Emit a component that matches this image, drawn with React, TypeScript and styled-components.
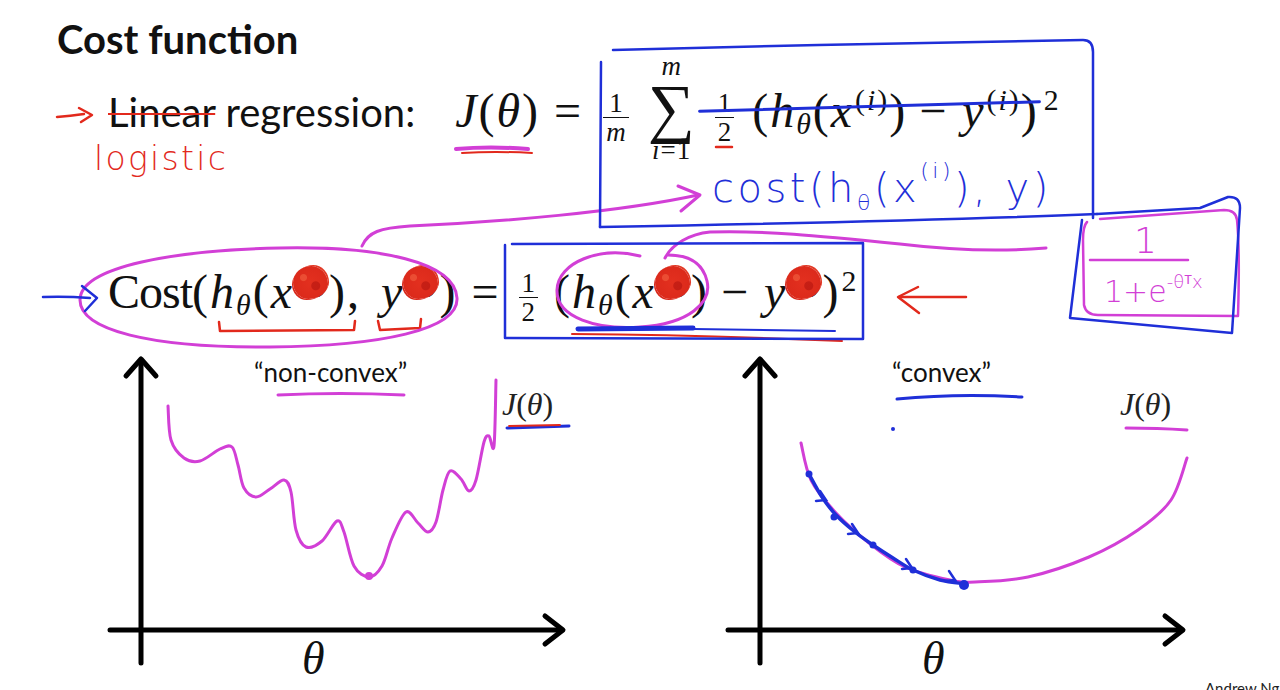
import React from 'react';
import styled, { createGlobalStyle } from 'styled-components';

const INK_BLUE = '#1f2fd8';
const INK_PINK = '#d23fd6';
const INK_RED = '#e2291c';

const GlobalStyle = createGlobalStyle`
  html, body { margin: 0; padding: 0; background: #fff; }
  body { font-family: Lato, 'Liberation Sans', sans-serif; }
`;

const Slide = styled.div`
  position: relative;
  width: 1280px;
  height: 690px;
  overflow: hidden;
  background: #fff;
  color: #111;
  display: flex;
  flex-direction: column;
`;

const Title = styled.h1`
  margin: 20px 0 0 57px;
  height: 33px;
  font: 700 40px/39px Lato, 'Liberation Sans', sans-serif;
`;

const FormulaRow = styled.div<{ $height: number }>`
  height: ${(p) => p.$height}px;
  padding-left: 108px;
  white-space: nowrap;
  line-height: 1;
`;

const Words = styled.span`
  font: 400 40px Lato, 'Liberation Sans', sans-serif;
`;

const Struck = styled.span`
  text-decoration: line-through;
  text-decoration-color: ${INK_RED};
  text-decoration-thickness: 2px;
`;

const Math = styled.span<{ $gap?: number }>`
  font-family: 'Liberation Serif', 'Times New Roman', serif;
  font-size: 48px;
  letter-spacing: 2px;
  margin-left: ${(p) => p.$gap ?? 0}px;
`;

const Roman = styled.span`
  letter-spacing: -1px;
`;

const I = styled.i`
  font-style: italic;
`;

const Op = styled.span<{ $l: number; $r: number }>`
  margin: 0 ${(p) => p.$r}px 0 ${(p) => p.$l}px;
`;

const Frac = styled.span<{ $drop: number; $l?: number; $r?: number }>`
  display: inline-block;
  vertical-align: -${(p) => p.$drop}px;
  font-size: 27px;
  letter-spacing: 0;
  line-height: 1;
  text-align: center;
  margin: 0 ${(p) => p.$r ?? 3}px 0 ${(p) => p.$l ?? 3}px;
`;

const Num = styled.span`
  display: block;
  padding: 0 3px;
`;

const Den = styled.span`
  display: block;
  border-top: 1.5px solid #111;
  padding: 1px 3px 0;
`;

const BigOp = styled.span`
  display: inline-block;
  vertical-align: -32px;
  text-align: center;
  line-height: 1;
  letter-spacing: 1px;
  margin: 0 16px 0 16px;
`;

const Limit = styled.span`
  display: block;
  font-size: 27px;
`;

const Sigma = styled.span`
  display: block;
  font-size: 66px;
  line-height: 0.86;
`;

const Sup = styled.sup<{ $l?: number }>`
  position: relative;
  font-size: 0.62em;
  line-height: 0;
  vertical-align: 0.58em;
  margin-left: ${(p) => p.$l ?? 1}px;
`;

const Sub = styled.sub`
  font-size: 0.62em;
  line-height: 0;
  vertical-align: -0.22em;
`;

const Blot = styled.span`
  position: absolute;
  left: -2px;
  top: 2px;
  width: 35px;
  height: 33px;
  border-radius: 52% 48% 55% 45% / 50% 55% 45% 50%;
  background:
    radial-gradient(circle at 30% 35%, rgba(240, 90, 60, 0.7) 0 3px, transparent 4px),
    radial-gradient(circle at 65% 60%, rgba(180, 20, 15, 0.6) 0 4px, transparent 5px),
    radial-gradient(circle at 50% 50%, #e3301f 0%, #dc2a1b 70%, #c9231a 100%);
  box-shadow: 2px -2px 0 -1px #e23a26, -2px 2px 0 -1px #d8271a;
`;

const Cancelled = styled.span`
  position: relative;
  &::after {
    content: '';
    position: absolute;
    left: -14px;
    right: -2px;
    top: 21px;
    height: 3px;
    background: ${INK_BLUE};
    transform: rotate(-1.6deg);
    border-radius: 2px;
  }
`;

const PlotRow = styled.div`
  display: grid;
  grid-template-columns: 500px 500px;
  column-gap: 120px;
  padding-left: 100px;
  height: 340px;
`;

const Plot = styled.div`
  position: relative;
  width: 500px;
  height: 340px;
`;

const PlotCanvas = styled.svg`
  display: block;
`;

const Caption = styled.span<{ $x: number }>`
  position: absolute;
  top: 6px;
  left: ${(p) => p.$x}px;
  font: 400 26px Lato, 'Liberation Sans', sans-serif;
  color: #111;
`;

const CurveLabel = styled.span<{ $x: number }>`
  position: absolute;
  top: 36px;
  left: ${(p) => p.$x}px;
  font: 32px 'Liberation Serif', 'Times New Roman', serif;
  color: #222;
`;

const AxisLabel = styled.span<{ $x: number }>`
  position: absolute;
  top: 282px;
  left: ${(p) => p.$x}px;
  font: italic 46px 'Liberation Serif', 'Times New Roman', serif;
`;

const Ink = styled.svg`
  position: absolute;
  left: 0;
  top: 0;
  pointer-events: none;
  fill: none;
  stroke-linecap: round;
  stroke-linejoin: round;
`;

const Credit = styled.span`
  position: absolute;
  left: 1205px;
  top: 679px;
  font: 400 15px Lato, 'Liberation Sans', sans-serif;
  color: #222;
`;

type Pt = [number, number];

const smooth = (pts: Pt[]) => {
  let d = `M${pts[0][0]} ${pts[0][1]}`;
  for (let i = 0; i < pts.length - 1; i++) {
    const p0 = pts[i - 1] || pts[i];
    const p1 = pts[i];
    const p2 = pts[i + 1];
    const p3 = pts[i + 2] || p2;
    const c1 = [p1[0] + (p2[0] - p0[0]) / 6, p1[1] + (p2[1] - p0[1]) / 6];
    const c2 = [p2[0] - (p3[0] - p1[0]) / 6, p2[1] - (p3[1] - p1[1]) / 6];
    d += ` C${c1[0]} ${c1[1]} ${c2[0]} ${c2[1]} ${p2[0]} ${p2[1]}`;
  }
  return d;
};

const wavy: Pt[] = [
  [168, 406], [171, 440], [184, 458], [200, 461], [220, 449], [232, 447],
  [238, 465], [244, 488], [256, 497], [270, 489], [284, 480], [291, 492],
  [296, 530], [306, 547], [322, 541], [337, 521], [344, 532], [354, 566],
  [369, 577], [382, 566], [392, 538], [406, 512], [418, 523], [428, 532],
  [436, 522], [443, 490], [450, 471], [461, 479], [469, 491], [476, 480],
  [484, 442], [489, 436], [494, 446], [496, 380],
];

const bowl: Pt[] = [
  [801, 443], [811, 480], [836, 513], [869, 543], [905, 567], [950, 580],
  [975, 582], [1028, 577], [1089, 557], [1138, 530], [1171, 500], [1187, 458],
];

const descent: Pt[] = [
  [809, 474], [822, 497], [836, 515], [855, 532], [873, 545], [893, 558],
  [913, 570], [940, 580], [966, 584],
];

const steps: Pt[] = [[809, 474], [834, 517], [873, 545], [913, 570], [964, 585]];
const heads: Pt[] = [[826, 500], [858, 533], [912, 568], [955, 580]];

const AxisPair = ({ x0, yAxis, xEnd }: { x0: number; yAxis: number; xEnd: number }) => (
  <g stroke="#000" strokeWidth={5} fill="none" strokeLinecap="round" strokeLinejoin="round">
    <path d={`M${yAxis} 362 L${yAxis} 663`} />
    <path d={`M${yAxis - 15} 376 L${yAxis} 359 L${yAxis + 15} 376`} />
    <path d={`M${x0} 630 L${xEnd} 630`} />
    <path d={`M${xEnd - 17} 616 L${xEnd + 1} 630 L${xEnd - 17} 644`} />
  </g>
);

const hand = "'DejaVu Sans', sans-serif";

export default function App() {
  return (
    <>
      <GlobalStyle />
      <Slide>
        <Title>Cost function</Title>

        <FormulaRow $height={215}>
          <Words>
            <Struck>Linear</Struck> regression:
          </Words>
          <Math $gap={40}>
            <I>J</I>(<I>θ</I>)
            <Op $l={14} $r={16}>=</Op>
            <Frac $drop={14} $l={4}>
              <Num>1</Num>
              <Den>
                <I>m</I>
              </Den>
            </Frac>
            <BigOp>
              <Limit>
                <I>m</I>
              </Limit>
              <Sigma>∑</Sigma>
              <Limit>
                <I>i</I>=1
              </Limit>
            </BigOp>
            <Cancelled>
              <Frac $drop={14} $r={18}>
                <Num>1</Num>
                <Den>2</Den>
              </Frac>
              (<I>h</I>
              <Sub>
                <I>θ</I>
              </Sub>
              (<I>x</I>
              <Sup>
                (<I>i</I>)
              </Sup>
              )<Op $l={12} $r={14}>−</Op>
              <I>y</I>
              <Sup>
                (<I>i</I>)
              </Sup>
              )
            </Cancelled>
            <Sup $l={5}>2</Sup>
          </Math>
        </FormulaRow>

        <FormulaRow $height={82}>
          <Math>
            <Roman>Cost</Roman>(<I>h</I>
            <Sub>
              <I>θ</I>
            </Sub>
            (<I>x</I>
            <Sup>
              (<I>i</I>)<Blot />
            </Sup>
            ),<Op $l={6} $r={0}> </Op>
            <I>y</I>
            <Sup>
              (<I>i</I>)<Blot />
            </Sup>
            )<Op $l={14} $r={15}>=</Op>
            <Frac $drop={13} $r={16}>
              <Num>1</Num>
              <Den>2</Den>
            </Frac>
            (<I>h</I>
            <Sub>
              <I>θ</I>
            </Sub>
            (<I>x</I>
            <Sup>
              (<I>i</I>)<Blot />
            </Sup>
            )<Op $l={12} $r={14}>−</Op>
            <I>y</I>
            <Sup>
              (<I>i</I>)<Blot />
            </Sup>
            )<Sup>2</Sup>
          </Math>
        </FormulaRow>

        <PlotRow>
          <Plot>
            <PlotCanvas width={500} height={340} viewBox="100 350 500 340">
              <AxisPair x0={110} yAxis={141} xEnd={562} />
              <path d={smooth(wavy)} stroke={INK_PINK} strokeWidth={3} fill="none" strokeLinecap="round" />
              <circle cx={369} cy={576} r={4} fill={INK_PINK} />
              <path d="M278 395 Q340 392 404 395" stroke={INK_PINK} strokeWidth={3} fill="none" strokeLinecap="round" />
              <path d="M507 428 L569 426" stroke={INK_BLUE} strokeWidth={3} fill="none" strokeLinecap="round" />
              <path d="M509 426 L560 425" stroke={INK_RED} strokeWidth={1.8} fill="none" strokeLinecap="round" />
            </PlotCanvas>
            <Caption $x={154}>“non-convex”</Caption>
            <CurveLabel $x={402}>
              <I>J</I>(<I>θ</I>)
            </CurveLabel>
            <AxisLabel $x={202}>θ</AxisLabel>
          </Plot>
          <Plot>
            <PlotCanvas width={500} height={340} viewBox="720 350 500 340">
              <AxisPair x0={728} yAxis={760} xEnd={1182} />
              <path d={smooth(bowl)} stroke={INK_PINK} strokeWidth={3} fill="none" strokeLinecap="round" />
              <path d={smooth(descent)} stroke={INK_BLUE} strokeWidth={3.5} fill="none" strokeLinecap="round" />
              {steps.map(([x, y], i) => (
                <circle key={i} cx={x} cy={y} r={i === steps.length - 1 ? 5 : 3.5} fill={INK_BLUE} />
              ))}
              {heads.map(([x, y], i) => (
                <path
                  key={i}
                  d={`M${x - 6} ${y - 9} L${x} ${y} L${x - 10} ${y + 1}`}
                  stroke={INK_BLUE}
                  strokeWidth={2.5}
                  fill="none"
                  strokeLinecap="round"
                />
              ))}
              <path d="M897 399 Q958 393 1022 397" stroke={INK_BLUE} strokeWidth={3} fill="none" strokeLinecap="round" />
              <circle cx={893} cy={429} r={2} fill={INK_BLUE} />
              <path d="M1126 428 Q1158 428 1187 430" stroke={INK_PINK} strokeWidth={3} fill="none" strokeLinecap="round" />
            </PlotCanvas>
            <Caption $x={172}>“convex”</Caption>
            <CurveLabel $x={400}>
              <I>J</I>(<I>θ</I>)
            </CurveLabel>
            <AxisLabel $x={202}>θ</AxisLabel>
          </Plot>
        </PlotRow>

        <Credit>Andrew Ng</Credit>

        <Ink width={1280} height={690} viewBox="0 0 1280 690">
          {/* red notes */}
          <g stroke={INK_RED} strokeWidth={2.5}>
            <path d="M57 117 Q70 116 84 114" />
            <path d="M79 108 L92 115 L81 122" />
            <path d="M716 147 L732 147" />
            <path d="M219 322 L220 331 L354 330 L355 321" />
            <path d="M378 321 L380 330 L420 328 L421 319" />
            <path d="M966 297 L899 297" />
            <path d="M918 287 L898 297 L919 313" />
            <path d="M572 334 Q700 335 842 341" strokeWidth={2} />
          </g>
          <text x={94} y={170} fill={INK_RED} fontSize={33} fontFamily={hand} fontWeight={200} textLength={132}>
            logistic
          </text>

          {/* pink notes */}
          <g stroke={INK_PINK} strokeWidth={3}>
            <path d="M456 149 Q490 146 528 149" strokeWidth={4} />
            <path d="M80 300 C80 266 178 250 280 248 C380 246 455 262 457 298 C459 330 380 346 270 347 C150 348 80 330 80 300" />
            <path d="M362 246 C368 232 380 228 410 226 C500 222 620 212 698 195" />
            <path d="M678 186 L700 195 L681 211" />
            <path d="M640 256 C600 246 558 262 557 290 C556 318 598 330 640 327 C690 324 712 302 707 281 C703 264 690 255 668 255" />
            <path d="M1046 248 C1000 252 950 250 900 244 C820 236 760 230 710 232 C690 234 672 244 665 258" />
            <path d="M1087 222 Q1083 226 1083 240 L1084 305 Q1086 315 1098 315 L1238 316 Q1240 250 1237 220 Q1236 210 1224 210 L1100 219" strokeWidth={2.5} />
            <path d="M1090 260 L1188 260" strokeWidth={2.5} />
          </g>
          <path d="M462 153 Q495 151 532 153" stroke={INK_RED} strokeWidth={2} />
          <text x={1134} y={253} fill={INK_PINK} fontSize={36} fontFamily={hand} fontWeight={200}>
            1
          </text>
          <text x={1104} y={302} fill={INK_PINK} fontSize={30} fontFamily={hand} fontWeight={200}>
            1+e
            <tspan fontSize={18} dy={-14}>
              -θᵀx
            </tspan>
          </text>

          {/* blue notes */}
          <g stroke={INK_BLUE} strokeWidth={2.5}>
            <path d="M43 297 Q65 296 90 298" />
            <path d="M82 286 L97 298 L85 311" />
            <path d="M613 50 C760 46 950 42 1083 40 Q1093 40 1093 52 L1093 218" />
            <path d="M601 62 L600 227" />
            <path d="M600 227 C760 224 950 220 1097 214" />
            <path d="M1097 214 L1200 208 L1228 197 Q1240 196 1240 208 L1232 333 L1070 318 L1082 220" />
            <path d="M512 244 L863 243 L863 339 L505 338 L505 245" />
            <path d="M578 329 L693 328" strokeWidth={5} />
            <path d="M693 329 Q760 330 835 331" strokeWidth={2} />
          </g>
          <text x={712} y={202} fill={INK_BLUE} fontSize={40} letterSpacing={3.5} fontFamily={hand} fontWeight={200}>
            cost(h
            <tspan fontSize={22} dy={8}>
              θ
            </tspan>
            <tspan dy={-8}>(x</tspan>
            <tspan fontSize={22} dy={-24}>
              (i)
            </tspan>
            <tspan dy={24}>), y)</tspan>
          </text>
        </Ink>
      </Slide>
    </>
  );
}
